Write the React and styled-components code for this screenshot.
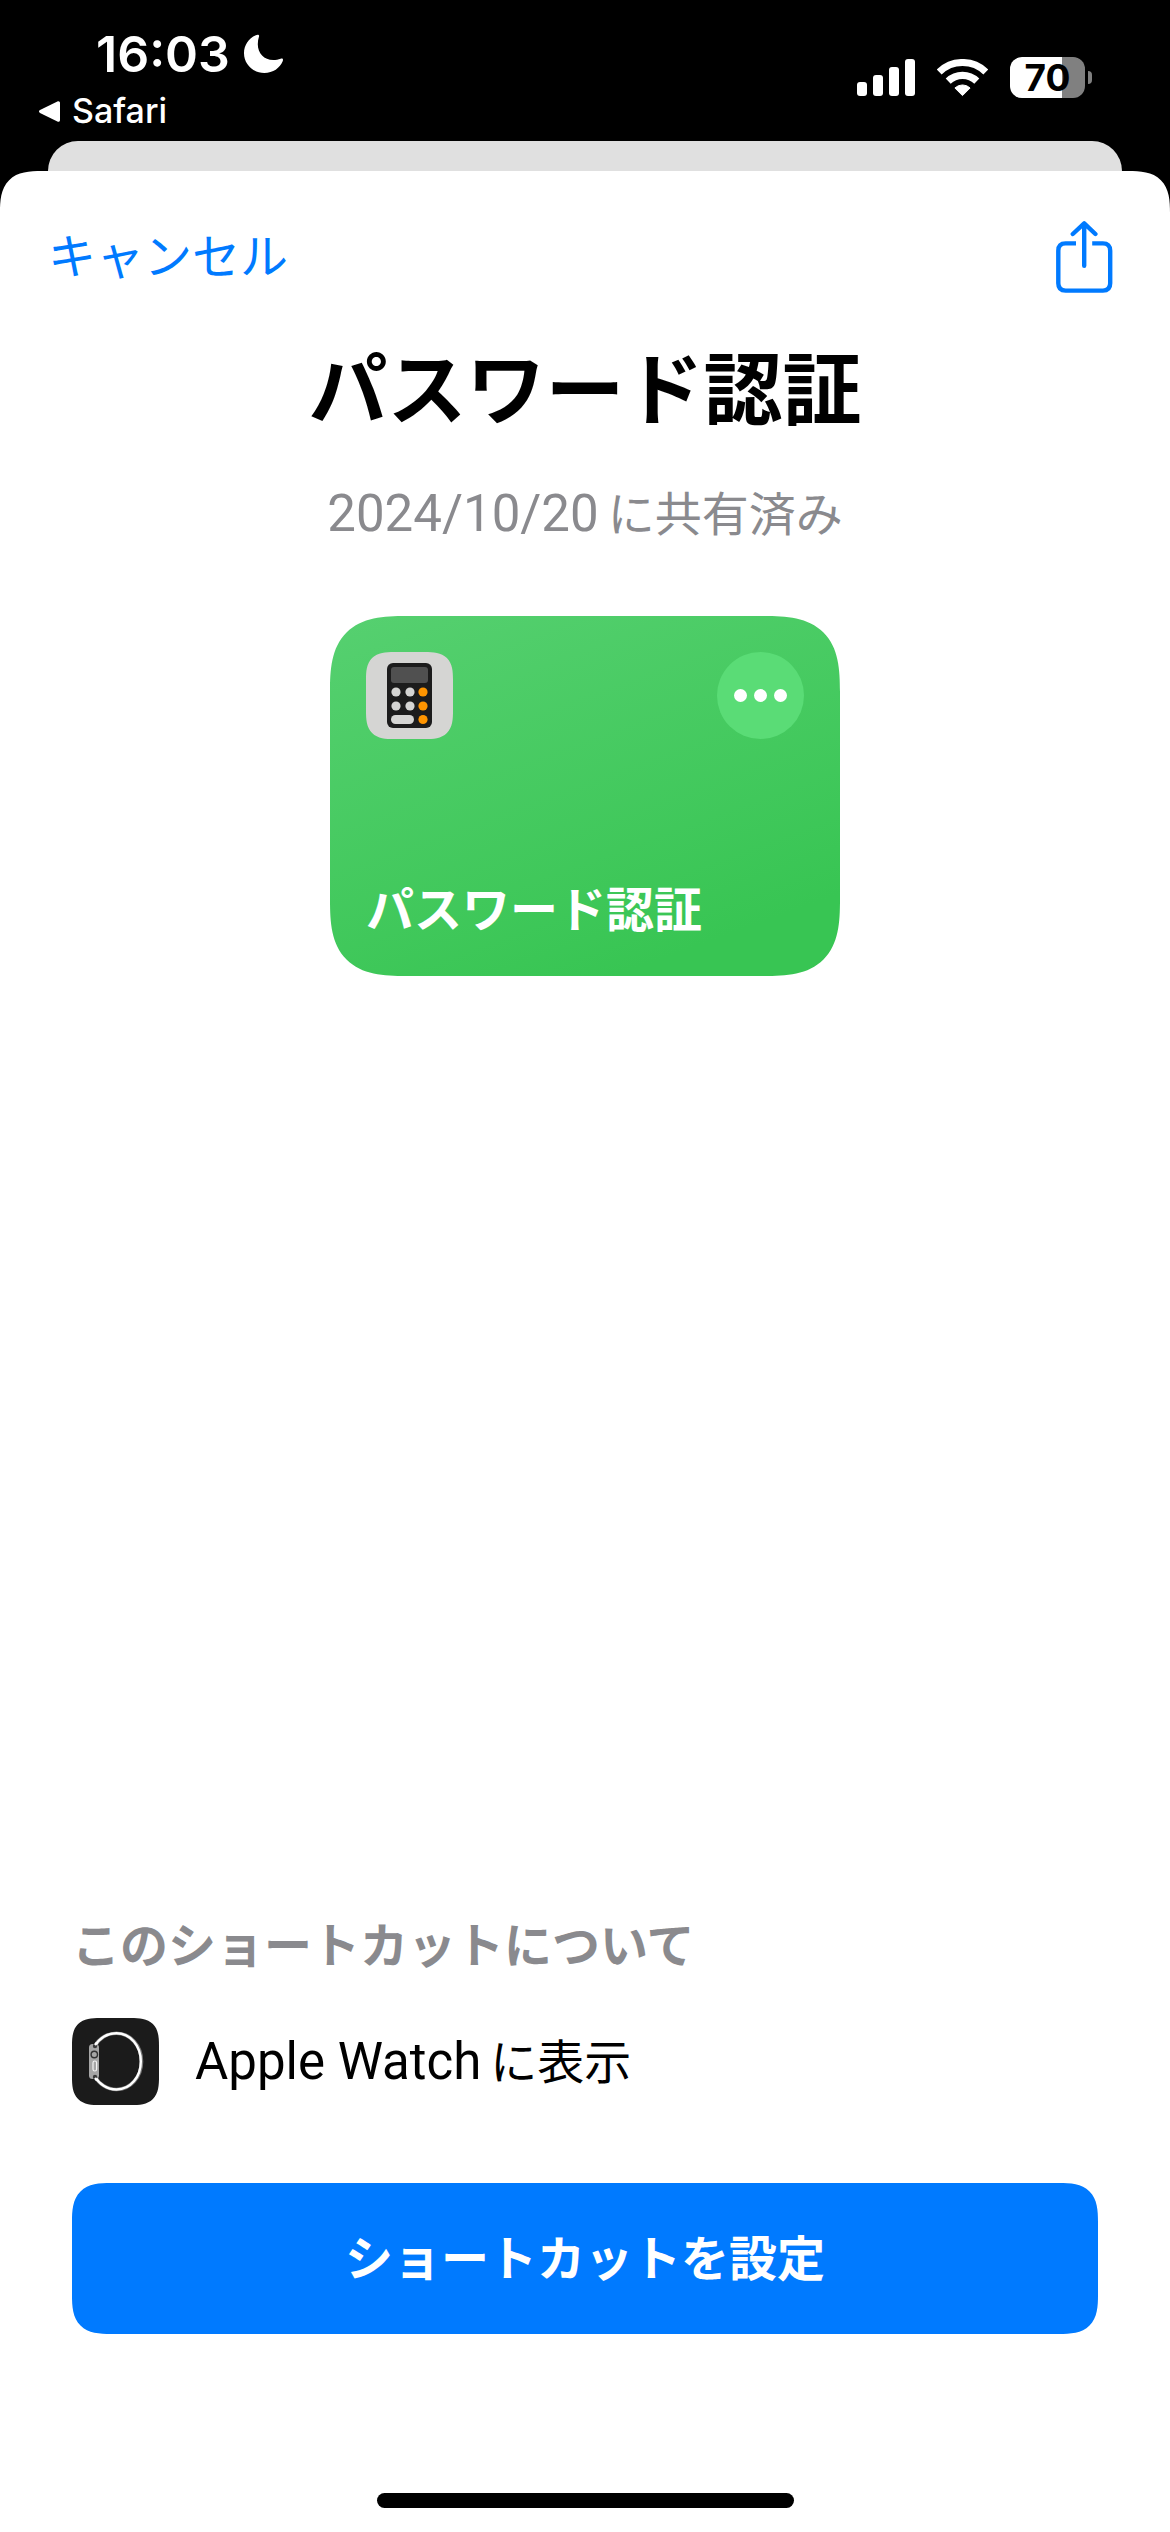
import React from "react";
import styled, { createGlobalStyle, css } from "styled-components";

const color = {
  blue: "#007aff",
  gray: "#8a8a8e",
  black: "#000000",
  white: "#ffffff",
};

const smoothCorner = (plain, smooth) => css`
  border-radius: ${plain};
  @supports (corner-shape: superellipse(1.5)) {
    border-radius: ${smooth};
    corner-shape: superellipse(1.5);
  }
`;

const GlobalStyle = createGlobalStyle`
  *, *::before, *::after { box-sizing: border-box; }
  body {
    margin: 0;
    background: ${color.black};
    font-family: Inter, "Noto Sans CJK JP", sans-serif;
    -webkit-font-smoothing: antialiased;
  }
  h1, h2, p { margin: 0; }
  button {
    border: 0;
    padding: 0;
    background: none;
    font-family: inherit;
    cursor: pointer;
  }
  svg { display: block; flex: none; }
`;

const Screen = styled.div`
  min-height: 100vh;
  display: flex;
  flex-direction: column;
  background: ${color.black};
`;

const StatusBar = styled.header`
  display: flex;
  justify-content: space-between;
  align-items: flex-start;
  height: 141px;
  padding: 24px 78px 0 39px;
  color: ${color.white};
`;

const StatusLeft = styled.div`
  display: flex;
  flex-direction: column;
  align-items: flex-start;
  gap: 6px;
`;

const ClockRow = styled.div`
  display: flex;
  align-items: center;
  gap: 14px;
  padding-left: 57px;
`;

const Clock = styled.time`
  font-size: 50px;
  line-height: 60px;
  font-weight: 600;
`;

const BackLink = styled.a`
  display: flex;
  align-items: center;
  gap: 12px;
  color: inherit;
  text-decoration: none;
  font-size: 34px;
  line-height: 42px;
  font-weight: 500;
`;

const StatusRight = styled.div`
  display: flex;
  align-items: center;
  gap: 22px;
  padding-top: 33px;
`;

const Battery = styled.div`
  display: flex;
  align-items: center;
  gap: 3px;
`;

const BatteryBody = styled.div`
  display: grid;
  place-items: center;
  width: 75px;
  height: 41px;
  border-radius: 12px;
  color: ${color.black};
  background: linear-gradient(
    to right,
    ${color.white} ${(p) => p.$level}%,
    #808080 ${(p) => p.$level}%
  );
  font-size: 37px;
  line-height: 41px;
  font-weight: 700;
`;

const BatteryTip = styled.div`
  width: 4px;
  height: 13px;
  border-radius: 0 4px 4px 0;
  background: #808080;
`;

const PreviousSheet = styled.div`
  height: 30px;
  margin: 0 48px;
  border-radius: 30px 30px 0 0;
  background: #e0e0e0;
`;

const Sheet = styled.main`
  flex: 1;
  display: flex;
  flex-direction: column;
  padding: 50px 0 24px;
  ${smoothCorner("33px 33px 0 0", "42px 42px 0 0")}
  background: ${color.white};
`;

const Toolbar = styled.div`
  display: flex;
  align-items: center;
  justify-content: space-between;
  padding: 0 57px 0 48px;
`;

const ToolbarButton = styled.button`
  color: ${color.blue};
  font-size: 48px;
  line-height: 72px;
`;

const Heading = styled.section`
  display: flex;
  flex-direction: column;
  align-items: center;
  gap: 46px;
  padding-top: 49px;
  text-align: center;
`;

const Title = styled.h1`
  font-size: 79px;
  line-height: 96px;
  font-weight: 700;
`;

const Body = styled.p`
  color: ${(p) => (p.$muted ? color.gray : color.black)};
  font-size: 47px;
  line-height: 60px;
`;

const Latin = styled.span`
  margin-right: 9px;
  font-family: Roboto, Inter, sans-serif;
  font-size: 51px;
  line-height: 1;
`;

const Card = styled.article`
  display: flex;
  flex-direction: column;
  justify-content: space-between;
  align-self: center;
  width: 510px;
  height: 360px;
  margin-top: 72px;
  padding: 36px;
  ${smoothCorner("60px", "76px")}
  background: linear-gradient(160deg, #56d070 0%, #38c553 85%);
`;

const CardTop = styled.div`
  display: flex;
  justify-content: space-between;
`;

const AppIcon = styled.div`
  flex: none;
  width: 87px;
  height: 87px;
  ${smoothCorner("21px", "28px")}
  background: ${(p) => p.$tint};
`;

const MoreButton = styled.button`
  display: flex;
  align-items: center;
  justify-content: center;
  gap: 7px;
  width: 87px;
  height: 87px;
  border-radius: 50%;
  background: #5adc76;
`;

const Dot = styled.span`
  width: 13px;
  height: 13px;
  border-radius: 50%;
  background: ${color.white};
`;

const CardTitle = styled.h2`
  color: ${color.white};
  font-size: 48px;
  line-height: 60px;
  font-weight: 700;
`;

const Footer = styled.section`
  display: flex;
  flex-direction: column;
  margin-top: auto;
  padding: 0 72px;
`;

const FooterTitle = styled.h2`
  color: ${color.gray};
  font-size: 48px;
  line-height: 60px;
  font-weight: 700;
`;

const FeatureRow = styled.div`
  display: flex;
  align-items: center;
  gap: 36px;
  margin-top: 42px;
`;

const PrimaryButton = styled.button`
  margin-top: 78px;
  height: 151px;
  ${smoothCorner("30px", "39px")}
  background: ${color.blue};
  color: ${color.white};
  font-size: 48px;
  line-height: 60px;
  font-weight: 700;
`;

const HomeIndicator = styled.div`
  align-self: center;
  width: 417px;
  height: 15px;
  margin-top: 159px;
  border-radius: 8px;
  background: ${color.black};
`;

const MoonIcon = () => (
  <svg width="40" height="40" viewBox="0 0 40 40" fill="currentColor" aria-hidden="true">
    <path d="M11.8 1.3C13.6.2 15.7.6 15 2.6C14.2 5 13.8 7.6 13.8 10.2C13.8 19.2 20.2 26 29.2 26C31.8 26 34.4 25.4 36.6 24.7C38.6 24.1 39.4 25 38.8 27C36 34 29 39 20.3 39C9 39 0 30.2 0 19.3C0 11.5 4.5 4.5 11.8 1.3Z" />
  </svg>
);

const BackIcon = () => (
  <svg width="21" height="21" viewBox="0 0 21 21" fill="currentColor" aria-hidden="true">
    <path d="M1 9L18.4.4C20 -.2 21 .6 21 2V19C21 20.4 20 21.2 18.4 20.6L1 12C-.4 11.2 -.4 9.8 1 9Z" />
  </svg>
);

const SignalIcon = () => (
  <svg width="58" height="38" viewBox="0 0 58 38" fill="currentColor" aria-hidden="true">
    <rect x="0" y="23" width="10" height="14" rx="3" />
    <rect x="16" y="16" width="10" height="21" rx="3" />
    <rect x="32" y="8" width="10" height="29" rx="3" />
    <rect x="48" y="0" width="10" height="37" rx="3" />
  </svg>
);

const WifiIcon = () => (
  <svg width="51" height="38" viewBox="0 0 51 38" fill="none" stroke="currentColor" aria-hidden="true">
    <path d="M2.2 12.9A33.5 33.5 0 0 1 48.8 12.9" strokeWidth="7" />
    <path d="M11.2 22.2A20.6 20.6 0 0 1 39.8 22.2" strokeWidth="7.2" />
    <path
      d="M17.9 29A11 11 0 0 1 33.1 29L25.5 36.6Z"
      fill="currentColor"
      strokeWidth="1"
      strokeLinejoin="round"
    />
  </svg>
);

const ShareIcon = () => (
  <svg
    width="57"
    height="72"
    viewBox="0 0 57 72"
    fill="none"
    stroke="currentColor"
    strokeWidth="4.4"
    aria-hidden="true"
  >
    <path d="M20 22.4H9.6Q2.3 22.4 2.3 29.7V62.3Q2.3 69.6 9.6 69.6H46.9Q54.2 69.6 54.2 62.3V29.7Q54.2 22.4 46.9 22.4H36.2" />
    <path d="M28.2 3V44.8M16.8 13L28.2 2.4L39.4 13" strokeLinecap="round" strokeLinejoin="round" />
  </svg>
);

const CalculatorArt = () => (
  <svg width="87" height="87" viewBox="0 0 87 87" aria-hidden="true">
    <rect x="21" y="11" width="45" height="65" rx="6" fill="#1c1c1c" />
    <rect x="25" y="15" width="37" height="16" rx="3" fill="#505050" />
    <g fill="#d5d5d3">
      <circle cx="30" cy="40" r="4.6" />
      <circle cx="44" cy="40" r="4.6" />
      <circle cx="30" cy="54" r="4.6" />
      <circle cx="44" cy="54" r="4.6" />
      <rect x="25" y="63" width="23" height="9" rx="4.5" />
    </g>
    <g fill="#ff9500">
      <circle cx="57" cy="40" r="4.6" />
      <circle cx="57" cy="54" r="4.6" />
      <circle cx="57" cy="67.5" r="4.6" />
    </g>
  </svg>
);

const WatchArt = () => (
  <svg width="87" height="87" viewBox="0 0 87 87" fill="none" aria-hidden="true">
    <rect x="17" y="26" width="10" height="35" rx="3.5" fill="#a6a6a6" />
    <path
      d="M23 28C27 20.500 35 15.200 44.500 15.200C58.500 15.200 69.500 28 69.500 43.500C69.500 59 58.500 71.500 44.500 71.500C35 71.500 27 66 23 58.500"
      stroke="#777777"
      strokeWidth="3.6"
    />
    <path
      d="M23 28C27 20.500 35 15.200 44.500 15.200C58.500 15.200 68.800 28 68.800 43.500C68.800 59 58.500 71.500 44.500 71.500C35 71.500 27 66 23 58.500"
      stroke="#ffffff"
      strokeWidth="2.4"
    />
    <circle cx="23" cy="28" r="2.2" fill="#3a3a3a" />
    <circle cx="23" cy="59" r="2.2" fill="#3a3a3a" />
    <path d="M23 27L25 24.500M23 60L25 62.500" stroke="#ffffff" strokeWidth="2.4" />
    <circle cx="22.300" cy="36.500" r="3.200" fill="#a6a6a6" stroke="#333333" strokeWidth="1.400" />
    <rect x="21" y="43" width="3.600" height="10" rx="1.800" fill="#a6a6a6" stroke="#f4f4f4" strokeWidth="1.200" />
  </svg>
);

export default function App() {
  return (
    <Screen lang="ja">
      <GlobalStyle />
      <StatusBar>
        <StatusLeft>
          <ClockRow>
            <Clock>16:03</Clock>
            <MoonIcon />
          </ClockRow>
          <BackLink href="#safari">
            <BackIcon />
            Safari
          </BackLink>
        </StatusLeft>
        <StatusRight>
          <SignalIcon />
          <WifiIcon />
          <Battery>
            <BatteryBody $level={70}>70</BatteryBody>
            <BatteryTip />
          </Battery>
        </StatusRight>
      </StatusBar>

      <PreviousSheet />
      <Sheet>
        <Toolbar>
          <ToolbarButton type="button">キャンセル</ToolbarButton>
          <ToolbarButton type="button" aria-label="共有">
            <ShareIcon />
          </ToolbarButton>
        </Toolbar>

        <Heading>
          <Title>パスワード認証</Title>
          <Body $muted>
            <Latin>2024/10/20</Latin>に共有済み
          </Body>
        </Heading>

        <Card>
          <CardTop>
            <AppIcon $tint="#d5d5d3">
              <CalculatorArt />
            </AppIcon>
            <MoreButton type="button" aria-label="その他">
              <Dot />
              <Dot />
              <Dot />
            </MoreButton>
          </CardTop>
          <CardTitle>パスワード認証</CardTitle>
        </Card>

        <Footer>
          <FooterTitle>このショートカットについて</FooterTitle>
          <FeatureRow>
            <AppIcon $tint="#1b1b1b">
              <WatchArt />
            </AppIcon>
            <Body>
              <Latin>Apple Watch</Latin>に表示
            </Body>
          </FeatureRow>
          <PrimaryButton type="button">ショートカットを設定</PrimaryButton>
        </Footer>
        <HomeIndicator />
      </Sheet>
    </Screen>
  );
}
